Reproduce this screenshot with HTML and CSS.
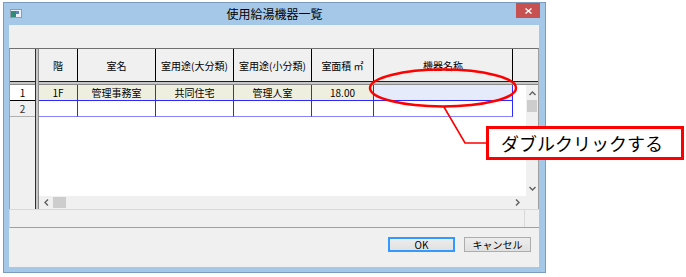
FILE: index.html
```html
<!DOCTYPE html>
<html lang="ja">
<head>
    <meta charset="UTF-8">
    <title>使用給湯機器一覧</title>
    <link rel="stylesheet" href="styles.css">
</head>
<body>
    <div class="window">
        <div class="titlebar">
            <svg class="app-icon" width="12" height="9" viewBox="0 0 12 9">
                <rect x="0.5" y="0.5" width="11" height="8" fill="#eef2f6" stroke="#8d9bab"/>
                <rect x="1" y="2" width="5" height="6" fill="#2e8c78"/>
                <rect x="6" y="2" width="3" height="3" fill="#5b82c4"/>
            </svg>
            <span class="title">使用給湯機器一覧</span>
            <span class="close">
                <svg width="7" height="6" viewBox="0 0 7 6"><path d="M0.5 0.5 L6.5 5.5 M6.5 0.5 L0.5 5.5" stroke="#fff" stroke-width="1.4"/></svg>
            </span>
        </div>

        <div class="client">
            <div class="toolbar"></div>

            <div class="sheet">
                <div class="corner"></div>
                <div class="colheads">
                    <div class="c-floor">階</div>
                    <div class="c-room">室名</div>
                    <div class="c-use1">室用途(大分類)</div>
                    <div class="c-use2">室用途(小分類)</div>
                    <div class="c-area">室面積 ㎡</div>
                    <div class="c-name">機器名称</div>
                    <div class="c-rest"></div>
                </div>
                <div class="hsep"></div>
                <div class="vsep"></div>
                <div class="rowheads">
                    <div class="current">1</div>
                    <div class="other">2</div>
                </div>
                <div class="rows">
                    <div class="row row-filled">
                        <div class="c-floor">1F</div>
                        <div class="c-room">管理事務室</div>
                        <div class="c-use1">共同住宅</div>
                        <div class="c-use2">管理人室</div>
                        <div class="c-area">18.00</div>
                        <div class="c-name active"></div>
                    </div>
                    <div class="row row-empty">
                        <div class="c-floor"></div>
                        <div class="c-room"></div>
                        <div class="c-use1"></div>
                        <div class="c-use2"></div>
                        <div class="c-area"></div>
                        <div class="c-name"></div>
                    </div>
                </div>
                <div class="vscroll">
                    <svg class="arrow-up" width="7" height="5" viewBox="0 0 7 5"><polyline points="0.5,4 3.5,1 6.5,4" fill="none" stroke="#606060" stroke-width="1.4"/></svg>
                    <div class="thumb-v"></div>
                    <div class="spacer"></div>
                    <svg class="arrow-down" width="7" height="5" viewBox="0 0 7 5"><polyline points="0.5,1 3.5,4 6.5,1" fill="none" stroke="#606060" stroke-width="1.4"/></svg>
                </div>
                <div class="hscroll">
                    <svg class="arrow-left" width="5" height="7" viewBox="0 0 5 7"><polyline points="4,0.5 1,3.5 4,6.5" fill="none" stroke="#606060" stroke-width="1.4"/></svg>
                    <div class="thumb-h"></div>
                    <div class="spacer"></div>
                    <svg class="arrow-right" width="5" height="7" viewBox="0 0 5 7"><polyline points="1,0.5 4,3.5 1,6.5" fill="none" stroke="#606060" stroke-width="1.4"/></svg>
                </div>
                <div class="sbcorner"></div>
            </div>

            <div class="status"><span></span></div>

            <div class="buttons">
                <button type="button" class="btn-ok">OK</button>
                <button type="button">キャンセル</button>
            </div>
        </div>
    </div>

    <!-- annotation drawn over the dialog -->
    <svg class="marks" width="686" height="277" viewBox="0 0 686 277">
        <ellipse cx="443" cy="88" rx="73" ry="18.5" fill="none" stroke="#ff0000" stroke-width="2.5"/>
        <polyline points="444,107 465,143 487,143" fill="none" stroke="#ff0000" stroke-width="1.6"/>
    </svg>
    <div class="callout">ダブルクリックする</div>
</body>
</html>
```

FILE: styles.css
```css
body { margin: 0; padding: 2px 0 0 3px; background: #fff; font-family: "Noto Sans CJK JP", "Liberation Sans", sans-serif; color: #000; }

.window { width: 543px; box-sizing: border-box; border: 1px solid #7c9cbf; background: #a5c8e9; padding-bottom: 5px; }
.titlebar { height: 22px; display: grid; grid-template-columns: 1fr auto 1fr; align-items: start; }
.app-icon { margin: 6px 0 0 6px; display: block; }
.title { font-size: 12px; line-height: 22px; }
.close { justify-self: end; width: 24px; height: 15px; margin-right: 5px; background: #c75050; display: flex; align-items: center; justify-content: center; }

.client { margin: 0 6px 0 5px; height: 242px; background: #f0f0f0; display: flex; flex-direction: column; }
.toolbar { height: 23px; flex: none; }

.sheet { display: grid; grid-template-columns: 25px 4px 487px 12px; grid-template-rows: 32px 4px 111px 13px; border-top: 1px solid #707070; border-left: 1px solid #a0a0a0; border-right: 1px solid #a0a0a0; background: #fff; flex: none; }
.corner { grid-column: 1; grid-row: 1; background: #f0f0f0; }
.hsep { grid-column: 1 / 5; grid-row: 2; background: #c6c6c6; border-top: 1px solid #202020; border-bottom: 1px solid #8a8a8a; }
.vsep { grid-column: 2; grid-row: 1 / 5; background: #c6c6c6; border-left: 1px solid #303030; border-right: 1px solid #8a8a8a; }

.colheads { grid-column: 3 / 5; grid-row: 1; display: flex; background: #f0f0f0; }
.colheads div { box-sizing: border-box; border-right: 1px solid #000; font-size: 10px; display: flex; align-items: center; justify-content: center; flex: none; }
.colheads .c-rest { flex: 1; border-right: none; }

.c-floor { width: 39px; }
.c-room { width: 78px; }
.c-use1 { width: 78px; }
.c-use2 { width: 78px; }
.c-area { width: 62px; }
.c-name { width: 139px; }

.rowheads { grid-column: 1; grid-row: 3 / 5; background: #f0f0f0; }
.rowheads div { height: 16px; box-sizing: border-box; font-size: 10px; line-height: 15px; text-align: center; }
.rowheads .current { background: #fff; border-bottom: 1px solid #000; }
.rowheads .other { border-bottom: 1px solid #b0b0b0; color: #333; }

.rows { grid-column: 3; grid-row: 3; background: #fff; }
.row { display: flex; height: 16px; }
.row div { box-sizing: border-box; flex: none; border-right: 1px solid #2a2aff; border-bottom: 1px solid #2a2aff; font-size: 10px; line-height: 15px; text-align: center; }
.row-filled div { background: #efefdf; }
.row-filled .active { background: #e5ebfb; }
.row-empty div { border-bottom-color: #8585ff; }

.vscroll { grid-column: 4; grid-row: 3; background: #f0f0f0; display: flex; flex-direction: column; align-items: center; }
.arrow-up { margin-top: 6px; }
.thumb-v { width: 10px; height: 12px; margin-top: 4px; background: #cdcdcd; }
.arrow-down { margin-bottom: 5px; }
.spacer { flex: 1; }

.hscroll { grid-column: 3; grid-row: 4; background: #f0f0f0; display: flex; align-items: center; }
.arrow-left { margin-left: 5px; }
.thumb-h { width: 13px; height: 11px; margin-left: 4px; background: #cdcdcd; }
.arrow-right { margin-right: 6px; }
.sbcorner { grid-column: 4; grid-row: 4; background: #f0f0f0; }

.status { height: 19px; box-sizing: border-box; flex: none; border-top: 1px solid #d9d9d9; border-left: 1px solid #d9d9d9; border-bottom: 1px solid #a0a0a0; display: flex; justify-content: flex-end; }
.status span { width: 14px; border-left: 1px solid #d9d9d9; }

.buttons { flex: 1; display: flex; justify-content: flex-end; align-items: flex-start; gap: 9px; padding: 9px 8px 0 0; }
button { width: 67px; height: 15px; padding: 0; font-family: "Noto Sans CJK JP", sans-serif; font-size: 10px; line-height: 12px; color: #000; background: linear-gradient(#ededed, #e0e0e0); border: 1px solid #adadad; }
.btn-ok { border-color: #3399ff; box-shadow: inset 0 0 0 1px #3399ff; }

.marks { position: absolute; left: 0; top: 0; pointer-events: none; }
.callout { position: absolute; left: 486px; top: 126px; width: 198px; height: 34px; box-sizing: border-box; border: 3px solid #ff0000; background: #fff; padding-left: 12px; font-size: 18px; line-height: 28px; }
```
